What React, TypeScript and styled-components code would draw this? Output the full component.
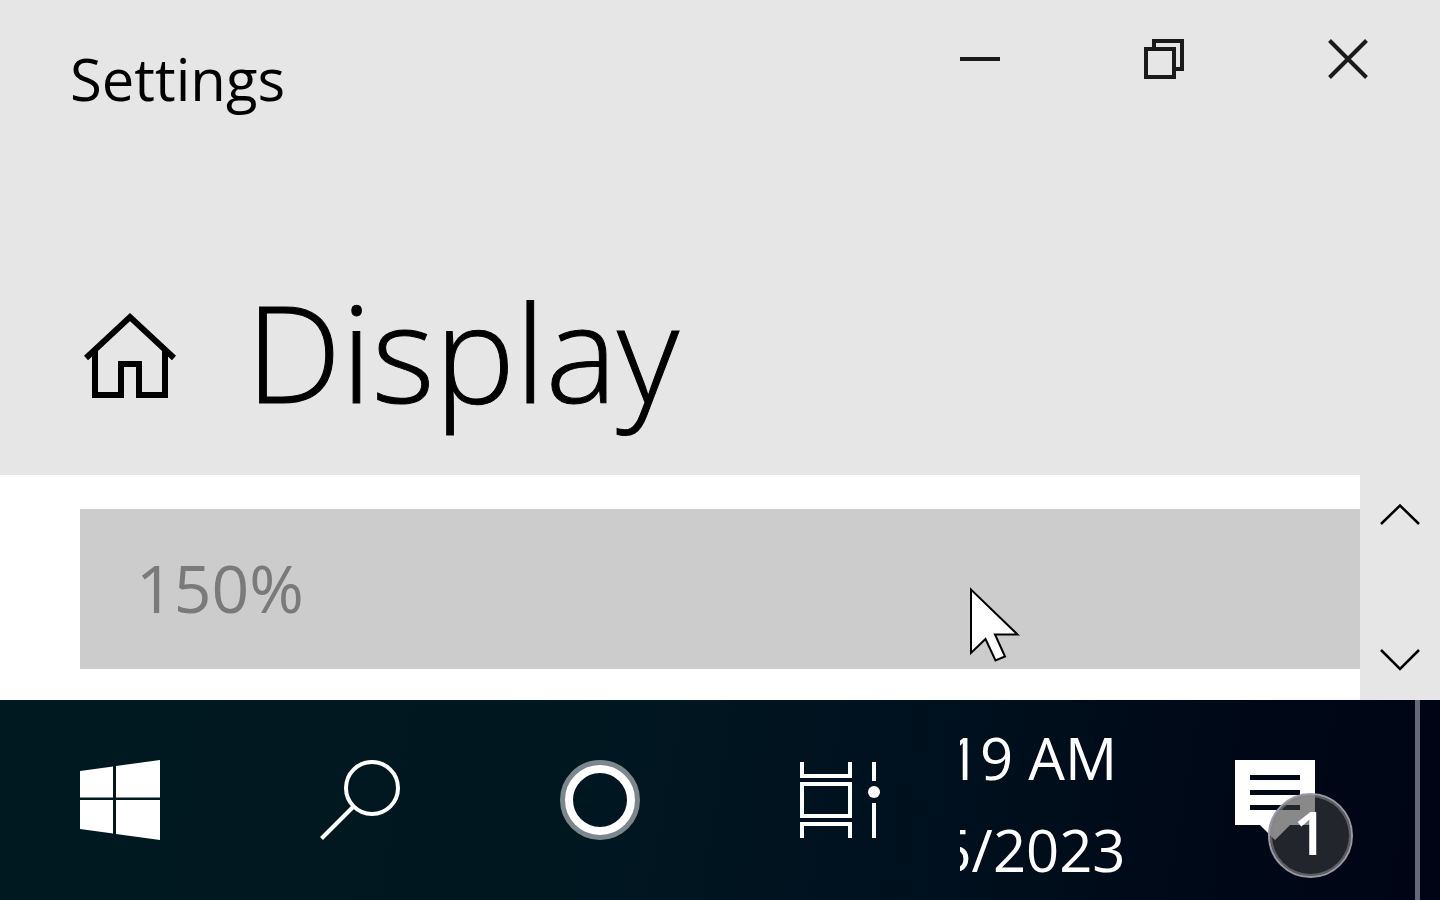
import React from "react";
import styled, { createGlobalStyle } from "styled-components";

const GlobalStyle = createGlobalStyle`
  *, *::before, *::after { box-sizing: border-box; }
  body {
    margin: 0;
    font-family: "Segoe UI", "Open Sans", "Noto Sans", sans-serif;
    color: #000;
    background: #fff;
  }
`;

const Desktop = styled.div`
  display: flex;
  flex-direction: column;
  min-height: 100vh;
`;

const SettingsWindow = styled.main`
  flex: 1;
  display: flex;
  flex-direction: column;
`;

const Header = styled.header`
  background: #e6e6e6;
  padding-bottom: 24px;
`;

const TitleBar = styled.div`
  display: flex;
  justify-content: space-between;
  align-items: flex-start;
`;

const WindowTitle = styled.span`
  padding: 39px 0 0 70px;
  font-size: 58px;
  line-height: 80px;
`;

const WindowControls = styled.div`
  display: flex;
`;

const IconButton = styled.button<{ $width: number; $height: number }>`
  display: flex;
  align-items: center;
  justify-content: center;
  width: ${(p) => p.$width}px;
  height: ${(p) => p.$height}px;
  padding: 0;
  border: 0;
  background: transparent;
`;

const PageHeading = styled.div`
  display: flex;
  align-items: center;
  gap: 70px;
  padding: 132px 0 0 84px;
`;

const HomeLink = styled.a`
  display: flex;
  padding-top: 10px;
`;

const PageTitle = styled.h1`
  margin: 0;
  font-size: 135px;
  font-weight: 300;
  line-height: 200px;
  -webkit-text-stroke: 1px #000;
`;

const Content = styled.section`
  flex: 1;
  display: flex;
  background: #fff;
`;

const Pane = styled.div`
  flex: 1;
  padding: 34px 0 31px 80px;
  position: relative;
`;

const ScaleSelect = styled.select`
  display: block;
  appearance: none;
  width: 100%;
  height: 160px;
  padding: 0 0 4px 56px;
  border: 0;
  border-radius: 0;
  background: #ccc;
  color: #7a7a7a;
  opacity: 1;
  font-family: inherit;
  font-size: 66px;
`;

const Pointer = styled.svg`
  position: absolute;
  left: 969px;
  top: 111px;
`;

const ScrollBar = styled.div`
  display: flex;
  flex-direction: column;
  justify-content: space-between;
  background: #e6e6e6;
`;

const Taskbar = styled.footer`
  display: flex;
  justify-content: space-between;
  height: 200px;
  background: linear-gradient(100deg, #001820 0%, #001720 40%, #00121f 60%, #000a18 80%, #000414 100%);
  color: #fff;
`;

const TaskGroup = styled.div`
  display: flex;
`;

const Clock = styled.button`
  display: flex;
  flex-direction: column;
  align-items: center;
  width: 230px;
  padding: 12px 86px 0 0;
  border: 0;
  overflow: hidden;
  background: transparent;
  color: #fff;
  font-family: inherit;
  font-size: 58px;
  line-height: 92px;
  white-space: nowrap;
`;

const Notifications = styled.button`
  position: relative;
  display: flex;
  align-items: flex-start;
  width: 225px;
  padding: 60px 0 0 45px;
  border: 0;
  background: transparent;
  color: #fff;
  font-family: inherit;
`;

const Badge = styled.span`
  position: absolute;
  left: 78px;
  top: 93px;
  width: 85px;
  height: 85px;
  border: 2px solid #9a9ba2;
  border-radius: 50%;
  background: rgba(58, 58, 60, 0.6);
  box-shadow: inset 0 0 0 2px rgba(130, 130, 140, 0.6);
  font-size: 60px;
  font-weight: 600;
  line-height: 74px;
  text-align: center;
`;

const ShowDesktop = styled.button`
  width: 25px;
  padding: 0;
  border: 0;
  border-left: 5px solid #666878;
  background: transparent;
`;

export default function App() {
  return (
    <>
      <GlobalStyle />
      <Desktop>
        <SettingsWindow>
          <Header>
            <TitleBar>
              <WindowTitle>Settings</WindowTitle>
              <WindowControls>
                <IconButton $width={184} $height={118} aria-label="Minimize">
                  <svg width="40" height="40"><path d="M0 20H40" stroke="#1a1a1a" strokeWidth="4" /></svg>
                </IconButton>
                <IconButton $width={184} $height={118} aria-label="Restore">
                  <svg width="40" height="40" fill="none" stroke="#1a1a1a" strokeWidth="4">
                    <path d="M2 10H30V38H2ZM10 10V2H38V30H30" />
                  </svg>
                </IconButton>
                <IconButton $width={184} $height={118} aria-label="Close">
                  <svg width="40" height="40"><path d="M1.5 1.5L38.5 38.5M38.5 1.5L1.5 38.5" stroke="#1a1a1a" strokeWidth="4" /></svg>
                </IconButton>
              </WindowControls>
            </TitleBar>
            <PageHeading>
              <HomeLink href="#home" aria-label="Home">
                <svg width="92" height="88" viewBox="0 0 92 88" fill="none" stroke="#000" strokeWidth="6">
                  <path d="M2 46L46 5L90 46" />
                  <path d="M11 38V83H37V52H55V83H81V38" />
                </svg>
              </HomeLink>
              <PageTitle>Display</PageTitle>
            </PageHeading>
          </Header>
          <Content>
            <Pane>
              <ScaleSelect aria-label="Scale" disabled defaultValue="150">
                <option value="150">150%</option>
              </ScaleSelect>
              <Pointer width="52" height="76" viewBox="0 0 52 76">
                <path d="M2 3.500V67L16.500 53L26.500 74.500L36 70.500L26 48.500H48.500Z" fill="#fff" stroke="#000" strokeWidth="2" />
              </Pointer>
            </Pane>
            <ScrollBar>
              <IconButton $width={80} $height={80} aria-label="Scroll up">
                <svg width="40" height="22" fill="none" stroke="#000" strokeWidth="2.500"><path d="M1 20L20 1.500L39 20" /></svg>
              </IconButton>
              <IconButton $width={80} $height={80} aria-label="Scroll down">
                <svg width="40" height="22" fill="none" stroke="#000" strokeWidth="2.500"><path d="M1 1L20 20L39 1" /></svg>
              </IconButton>
            </ScrollBar>
          </Content>
        </SettingsWindow>
        <Taskbar>
          <TaskGroup>
            <IconButton $width={240} $height={200} aria-label="Start">
              <svg width="80" height="80" fill="#fff">
                <path d="M0 11L33 6.500V37.500H0ZM36 6L80 0V37.500H36ZM0 40H33V73.500L0 69ZM36 40H80V80L36 74Z" />
              </svg>
            </IconButton>
            <IconButton $width={240} $height={200} aria-label="Search">
              <svg width="80" height="80" fill="none" stroke="#fff" strokeWidth="4">
                <circle cx="52" cy="28" r="26" />
                <path d="M1.500 78.500L33.500 46.500" />
              </svg>
            </IconButton>
            <IconButton $width={240} $height={200} aria-label="Cortana">
              <svg width="80" height="80" fill="none">
                <circle cx="40" cy="40" r="37" stroke="#7b878c" strokeWidth="6" />
                <circle cx="40" cy="40" r="31" stroke="#fff" strokeWidth="8" />
              </svg>
            </IconButton>
            <IconButton $width={240} $height={200} aria-label="Task View">
              <svg width="80" height="80" fill="none" stroke="#fff" strokeWidth="4">
                <path d="M2 2V16H50V2M2 24H50V56H2ZM2 78V64H50V78M74 2V21M74 43V78" />
                <circle cx="74" cy="32" r="6" fill="#fff" stroke="none" />
              </svg>
            </IconButton>
          </TaskGroup>
          <TaskGroup>
            <Clock>
              <span>19 AM</span>
              <span>5/2023</span>
            </Clock>
            <Notifications aria-label="Notifications">
              <svg width="80" height="80" fill="#fff">
                <path fillRule="evenodd" d="M0 0H80V65H55L40 80L25 65H0ZM15 15V20H65V15ZM15 30V35H65V30ZM15 45V50H65V45Z" />
              </svg>
              <Badge>1</Badge>
            </Notifications>
            <ShowDesktop aria-label="Show desktop" />
          </TaskGroup>
        </Taskbar>
      </Desktop>
    </>
  );
}
